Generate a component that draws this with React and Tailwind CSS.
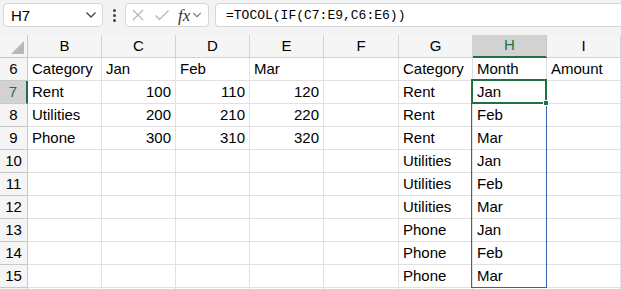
import React from "react";

const cols = [
  { k: "B", w: "w-[74px]" },
  { k: "C", w: "w-[74px]" },
  { k: "D", w: "w-[74px]" },
  { k: "E", w: "w-[74px]" },
  { k: "F", w: "w-[75px]" },
  { k: "G", w: "w-[74px]" },
  { k: "H", w: "w-[74px]" },
  { k: "I", w: "w-[74px]" },
];

const rows = [
  [6, ["Category", "Jan", "Feb", "Mar", "", "Category", "Month", "Amount"]],
  [7, ["Rent", 100, 110, 120, "", "Rent", "Jan", ""]],
  [8, ["Utilities", 200, 210, 220, "", "Rent", "Feb", ""]],
  [9, ["Phone", 300, 310, 320, "", "Rent", "Mar", ""]],
  [10, ["", "", "", "", "", "Utilities", "Jan", ""]],
  [11, ["", "", "", "", "", "Utilities", "Feb", ""]],
  [12, ["", "", "", "", "", "Utilities", "Mar", ""]],
  [13, ["", "", "", "", "", "Phone", "Jan", ""]],
  [14, ["", "", "", "", "", "Phone", "Feb", ""]],
  [15, ["", "", "", "", "", "Phone", "Mar", ""]],
  [16, ["", "", "", "", "", "", "", ""]],
];

function Chevron({ className }) {
  return (
    <svg className={className} width="12" height="8" viewBox="0 0 12 8" fill="none">
      <path d="M1.5 1.5 L6 6 L10.5 1.5" stroke="currentColor" strokeWidth="1.3" />
    </svg>
  );
}

export default function App() {
  return (
    <div className="w-[621px] h-[289px] overflow-hidden bg-white text-black relative" style={{ fontFamily: '"Liberation Sans", Arial, sans-serif' }}>
      {/* toolbar */}
      <div className="h-[35px] bg-[#f3f3f3] flex items-start pt-[3px] pl-[3px]">
        <div className="w-[100px] h-[24px] bg-white border border-[#d6d6d6] rounded-[4px] flex items-center justify-between pl-[7px] pr-[5px]">
          <span className="text-[15px] leading-none">H7</span>
          <Chevron className="text-[#444]" />
        </div>
        <div className="w-[22px] h-[24px] flex flex-col items-center justify-center gap-[2px]">
          <div className="w-[3px] h-[3px] bg-[#444] rounded-full" />
          <div className="w-[3px] h-[3px] bg-[#444] rounded-full" />
          <div className="w-[3px] h-[3px] bg-[#444] rounded-full" />
        </div>
        <div className="w-[84px] h-[24px] bg-white border border-[#d6d6d6] rounded-[4px] flex items-center pl-[5px]">
          <svg width="14" height="14" viewBox="0 0 14 14" className="text-[#b5b5b5]">
            <path d="M2 2 L12 12 M12 2 L2 12" stroke="currentColor" strokeWidth="1.2" />
          </svg>
          <svg width="16" height="14" viewBox="0 0 16 14" className="text-[#b5b5b5] ml-[9px]">
            <path d="M1.5 7.5 L5.5 11.5 L14.5 2.5" stroke="currentColor" strokeWidth="1.2" fill="none" />
          </svg>
          <span className="ml-[8px] text-[17px] italic leading-none text-[#333]" style={{ fontFamily: '"Liberation Serif", serif' }}>fx</span>
          <Chevron className="text-[#777] ml-[2px] w-[10px]" />
        </div>
        <div className="ml-[6px] flex-1 h-[24px] bg-white border border-[#d6d6d6] border-r-0 rounded-l-[4px] flex items-center pl-[10px]">
          <span className="text-[13px] leading-none" style={{ fontFamily: '"Liberation Mono", monospace' }}>=TOCOL(IF(C7:E9,C6:E6))</span>
        </div>
      </div>

      {/* header row */}
      <div className="flex h-[23px] text-[15px]">
        <div className="w-[28px] h-[23px] bg-[#f5f5f5] border-r border-b border-[#c8c8c8] relative">
          <svg className="absolute right-[3px] bottom-[3px]" width="13" height="13" viewBox="0 0 13 13">
            <path d="M13 0 L13 13 L0 13 Z" fill="#b8b8b8" />
          </svg>
        </div>
        {cols.map((c) =>
          c.k === "H" ? (
            <div key={c.k} className={`${c.w} h-[23px] bg-[#d2d2d2] border-r border-[#c8c8c8] border-b-2 border-b-[#1e7145] flex items-center justify-center text-[#1e7145]`}>
              {c.k}
            </div>
          ) : (
            <div key={c.k} className={`${c.w} h-[23px] bg-[#f5f5f5] border-r border-b border-[#d4d4d4] flex items-center justify-center`}>
              {c.k}
            </div>
          )
        )}
      </div>

      {/* body */}
      {rows.map(([n, vals]) => (
        <div key={n} className="flex h-[23px] text-[15px]">
          {n === 7 ? (
            <div className="w-[28px] h-[23px] bg-[#d2d2d2] border-r-2 border-[#1e7145] border-b border-b-[#c8c8c8] flex items-center justify-center text-[#1e7145]">
              {n}
            </div>
          ) : (
            <div className="w-[28px] h-[23px] bg-[#f5f5f5] border-r border-b border-[#c8c8c8] flex items-center justify-center">
              {n === 16 ? "" : n}
            </div>
          )}
          {vals.map((v, i) => (
            <div
              key={i}
              className={`${cols[i].w} h-[23px] border-r border-b border-[#e1e1e1] flex items-center px-[4px] pt-[1px] ${typeof v === "number" ? "justify-end" : "justify-start"}`}
            >
              {v}
            </div>
          ))}
        </div>
      ))}

      {/* spill range border */}
      <div className="absolute left-[471px] top-[80px] w-[76px] h-[208px] border border-[#3a5fad] pointer-events-none" />
      {/* active cell */}
      <div className="absolute left-[471px] top-[79px] w-[76px] h-[25px] border-2 border-[#1e7145] pointer-events-none" />
      <div className="absolute left-[543px] top-[100px] w-[6px] h-[6px] bg-[#1e7145] border border-white pointer-events-none" />
    </div>
  );
}
